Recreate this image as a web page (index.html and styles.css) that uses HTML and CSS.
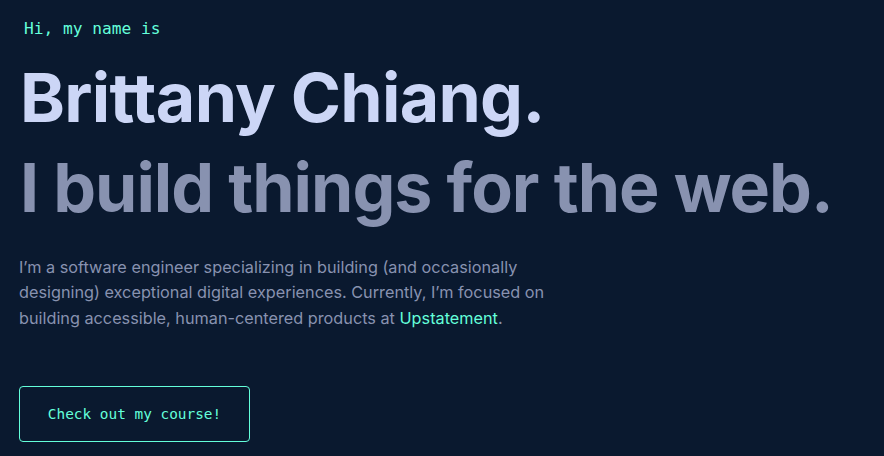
FILE: index.html
```html
<!DOCTYPE html>
<html lang="en">
<head>
<meta charset="utf-8">
<title>Brittany Chiang</title>
<link rel="stylesheet" href="styles.css">
</head>
<body>
<section class="hero">
  <h1 class="intro">Hi, my name is</h1>
  <h2 class="big-heading name">Brittany Chiang.</h2>
  <h3 class="big-heading tagline">I build things for the web.</h3>
  <p class="about">I’m a software engineer specializing in building (and occasionally designing) exceptional digital experiences. Currently, I’m focused on building accessible, human-centered products at <a class="link" href="#">Upstatement</a>.</p>
  <a class="course-btn" href="#">Check out my course!</a>
</section>
</body>
</html>
```

FILE: styles.css
```css
html, body {
  margin: 0;
  padding: 0;
  background: #0a192f;
}
body {
  font-family: Inter, "Noto Sans", sans-serif;
  color: #8892b0;
}
.hero {
  display: flex;
  flex-direction: column;
  align-items: flex-start;
  padding: 16px 20px 0 19px;
}
.intro {
  margin: 0 0 0 5px;
  font-family: "DejaVu Sans Mono", monospace;
  font-size: 16.2px;
  font-weight: 400;
  line-height: 26px;
  color: #64ffda;
}
.big-heading {
  margin: 0 0 0 1px;
  font-size: 68px;
  font-weight: 650;
  line-height: 74.8px;
  letter-spacing: -0.7px;
}
.name {
  margin-top: 18px;
  color: #ccd6f6;
}
.tagline {
  margin-top: 15px;
  color: #8892b0;
  letter-spacing: -1px;
}
.about {
  max-width: 550px;
  margin: 30px 0 0 0;
  font-size: 16.25px;
  line-height: 25.5px;
}
.link {
  color: #64ffda;
  text-decoration: none;
}
.course-btn {
  display: flex;
  align-items: center;
  justify-content: center;
  box-sizing: border-box;
  width: 231px;
  height: 56px;
  margin-top: 55px;
  border: 1px solid #64ffda;
  border-radius: 4px;
  font-family: "DejaVu Sans Mono", monospace;
  font-size: 14.4px;
  color: #64ffda;
  text-decoration: none;
}
```
